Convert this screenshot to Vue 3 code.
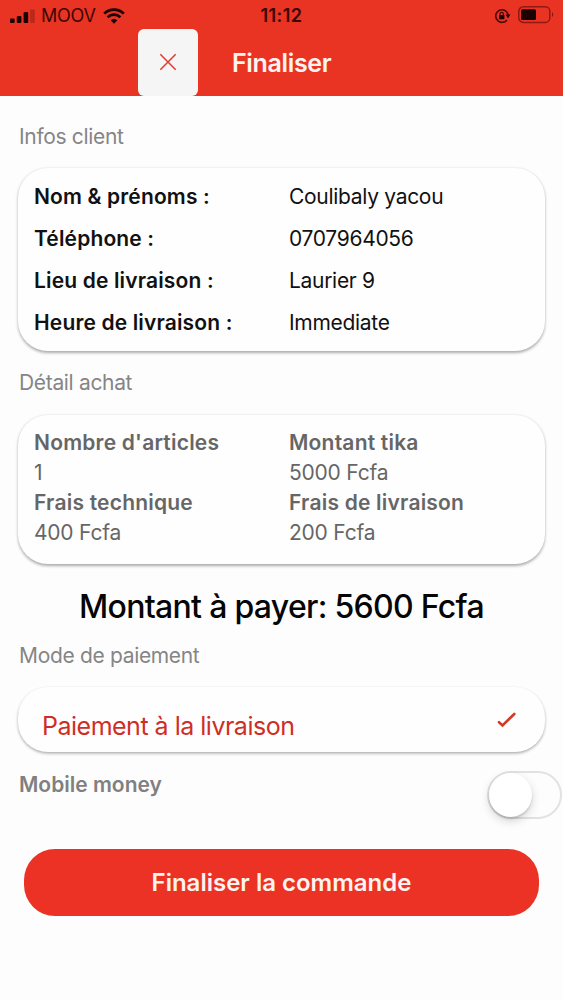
<template>
  <div class="screen">
    <header class="header">
      <div class="status-bar">
        <div class="status-left">
          <svg class="signal" width="26" height="16" viewBox="0 0 26 16">
            <rect x="0" y="10.5" width="4.6" height="4.5" rx="1" />
            <rect x="6.8" y="8" width="4.6" height="7" rx="1" />
            <rect x="13.6" y="4" width="4.6" height="11" rx="1" />
            <rect x="20.2" y="1.5" width="4.6" height="13.5" rx="1" opacity="0.22" />
          </svg>
          <span class="carrier">MOOV</span>
          <svg class="wifi" width="22" height="16" viewBox="0 0 22 16">
            <path d="M1.2 5.6a14 14 0 0 1 19.6 0" />
            <path d="M4.6 9.2a9.2 9.2 0 0 1 12.8 0" />
            <path class="wifi-dot" d="M7.6 12.3a5 5 0 0 1 6.8 0L11 15.8z" />
          </svg>
        </div>
        <span class="clock">11:12</span>
        <div class="status-right">
          <svg width="17" height="16" viewBox="0 0 17 16">
            <path class="lock-ring" d="M12.6 3.7a6.3 6.3 0 1 0 .4 8.2" />
            <path class="lock-ring" d="M12.6 3.7a6.3 6.3 0 0 1 1.5 3.8" />
            <path d="M11.4 6.6h5l-2.4 3.6z" />
            <rect x="5" y="7" width="5.4" height="4.3" rx="0.6" />
            <path class="shackle" d="M6 7.2V6a1.7 1.7 0 0 1 3.4 0v1.2" />
          </svg>
          <svg class="battery" width="36" height="18" viewBox="0 0 36 18">
            <rect class="battery-frame" x="0.8" y="0.8" width="31" height="15.6" rx="4.5" />
            <rect x="3" y="3.2" width="15" height="10.8" rx="1.5" />
            <path d="M34 6.3c1.6.6 1.6 4 0 4.6z" opacity="0.5" />
          </svg>
        </div>
      </div>
      <div class="title-bar">
        <button class="close-btn">
          <svg width="18" height="18" viewBox="0 0 18 18">
            <path d="M1.3 1.3l15.4 15.4M16.7 1.3L1.3 16.7" />
          </svg>
        </button>
        <h1>Finaliser</h1>
      </div>
    </header>

    <main class="content">
      <h2 class="section-title">Infos client</h2>
      <div class="card client">
        <div class="client-row" v-for="info in infos" :key="info.label">
          <strong>{{ info.label }}</strong>
          <span>{{ info.value }}</span>
        </div>
      </div>

      <h2 class="section-title detail-title">Détail achat</h2>
      <div class="card details">
        <div v-for="detail in details" :key="detail.label">
          <strong>{{ detail.label }}</strong>
          <p>{{ detail.value }}</p>
        </div>
      </div>

      <p class="total">Montant à payer: 5600 Fcfa</p>

      <h2 class="section-title payment-title">Mode de paiement</h2>
      <div class="card payment">
        <span>Paiement à la livraison</span>
        <svg width="20" height="18" viewBox="0 0 20 18">
          <path d="M3 11.2l3.5 3.2L18.3 3" />
        </svg>
      </div>

      <div class="mobile-money">
        <strong>Mobile money</strong>
        <button :class="['toggle', { on: mobileMoney }]" @click="mobileMoney = !mobileMoney">
          <span class="knob"></span>
        </button>
      </div>

      <button class="submit-btn">Finaliser la commande</button>
    </main>
  </div>
</template>

<script setup>
import { ref } from 'vue'

const mobileMoney = ref(false)

const infos = [
  { label: 'Nom & prénoms :', value: 'Coulibaly yacou' },
  { label: 'Téléphone :', value: '0707964056' },
  { label: 'Lieu de livraison :', value: 'Laurier 9' },
  { label: 'Heure de livraison :', value: 'Immediate' }
]

const details = [
  { label: "Nombre d'articles", value: '1' },
  { label: 'Montant tika', value: '5000 Fcfa' },
  { label: 'Frais technique', value: '400 Fcfa' },
  { label: 'Frais de livraison', value: '200 Fcfa' }
]
</script>

<style>
body {
  margin: 0;
  background: #fefdfe;
}
</style>

<style scoped>
.screen {
  height: 1000px;
  overflow: hidden;
  background: #fefdfe;
  color: #111;
  font-family: Inter, "Liberation Sans", sans-serif;
  font-size: 21px;
}

h1, h2, p {
  margin: 0;
}

button {
  border: none;
  padding: 0;
  font-family: inherit;
  cursor: pointer;
}

strong {
  font-weight: 600;
}

.header {
  height: 96px;
  background: #e93323;
}

.status-bar {
  display: grid;
  grid-template-columns: 1fr auto 1fr;
  align-items: center;
  height: 29px;
  padding: 2px 9px 0 10px;
  box-sizing: border-box;
  color: #3b0603;
  fill: #1c0201;
}

.status-left,
.status-right {
  display: flex;
  align-items: center;
}

.status-right {
  justify-content: flex-end;
  gap: 7px;
}

.carrier {
  margin: 0 7px 0 5px;
  font-size: 18px;
  letter-spacing: -0.2px;
}

.wifi path {
  fill: none;
  stroke: #1c0201;
  stroke-width: 2.7;
}

.wifi .wifi-dot {
  fill: #1c0201;
  stroke: none;
}

.clock {
  margin-right: 1px;
  font-size: 18px;
  font-weight: 600;
  letter-spacing: 0.4px;
}

.lock-ring,
.shackle {
  fill: none;
  stroke: #4b0805;
  stroke-width: 1.6;
}

.shackle {
  stroke-width: 1.2;
}

.battery {
  margin-top: -1px;
}

.battery-frame {
  fill: none;
  stroke: #8f1a12;
  stroke-width: 1.5;
}

.title-bar {
  display: flex;
  align-items: center;
  height: 67px;
  padding-left: 138px;
}

.close-btn {
  display: flex;
  align-items: center;
  justify-content: center;
  box-sizing: border-box;
  width: 60px;
  height: 67px;
  padding: 0 1px 1px 0;
  border-radius: 6px;
  background: #f5f5f5;
}

.close-btn path {
  stroke: #dc3b2e;
  stroke-width: 1.5;
}

h1 {
  margin-left: 34px;
  color: #fff3f0;
  font-size: 25px;
  font-weight: 600;
  letter-spacing: -0.35px;
}

.content {
  padding: 26px 18px 0;
}

.section-title {
  padding-left: 1px;
  color: #858585;
  font-size: 21px;
  font-weight: 400;
  letter-spacing: -0.33px;
  line-height: 30px;
}

.card {
  box-sizing: border-box;
  margin-top: 16px;
  border-radius: 30px;
  background: #fffeff;
  box-shadow: 0 1.5px 3px rgba(0, 0, 0, 0.32);
}

.client {
  height: 183px;
  padding: 8px 16px;
}

.client-row {
  display: grid;
  grid-template-columns: 255px 1fr;
  line-height: 42px;
}

.client-row strong {
  letter-spacing: 0.15px;
}

.client-row span {
  letter-spacing: -0.3px;
}

.detail-title {
  margin-top: 17px;
}

.details {
  display: grid;
  grid-template-columns: 255px 1fr;
  height: 149px;
  margin-top: 17px;
  padding: 13px 16px 16px;
  color: #666;
  line-height: 30px;
}

.details strong {
  display: block;
  letter-spacing: 0.21px;
}

.details p {
  letter-spacing: -0.22px;
}

.total {
  margin-top: 23px;
  color: #050505;
  font-size: 32px;
  font-weight: 500;
  letter-spacing: -0.7px;
  line-height: 40px;
  text-align: center;
}

.payment-title {
  margin-top: 14px;
}

.payment {
  display: flex;
  align-items: center;
  justify-content: space-between;
  height: 65px;
  padding: 0 29px 0 24px;
  color: #cf2e26;
  font-size: 25px;
  letter-spacing: -0.5px;
}

.payment span {
  padding-top: 13px;
}

.payment path {
  fill: none;
  stroke: #d13a2b;
  stroke-width: 2.6;
  stroke-linecap: round;
}

.mobile-money {
  display: flex;
  align-items: flex-start;
  justify-content: space-between;
  height: 48px;
  margin: 18px -17px 0 1px;
  color: #808080;
  line-height: 30px;
}

.toggle {
  box-sizing: border-box;
  display: flex;
  width: 75px;
  height: 48px;
  margin-top: 1px;
  border: 2px solid #e2e2e4;
  border-radius: 24px;
  background: #fefdfe;
}

.toggle.on {
  justify-content: flex-end;
  background: #e93323;
}

.knob {
  width: 43px;
  height: 44px;
  border-radius: 50%;
  background: #fff;
  box-shadow: 0 4px 10px rgba(0, 0, 0, 0.17), 0 2px 2px rgba(0, 0, 0, 0.12);
}

.submit-btn {
  display: block;
  width: 515px;
  height: 67px;
  margin: 31px 0 0 6px;
  border-radius: 31px;
  background: #eb3224;
  color: #fff3f0;
  font-size: 24px;
  font-weight: 600;
}
</style>
